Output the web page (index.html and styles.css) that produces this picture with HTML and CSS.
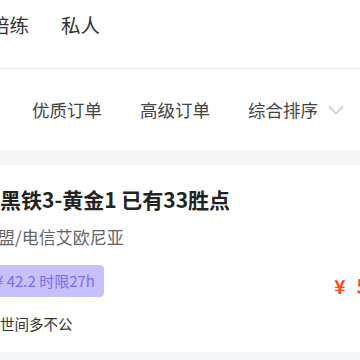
FILE: index.html
```html
<!DOCTYPE html>
<html lang="zh">
<head>
<meta charset="utf-8">
<link rel="stylesheet" href="styles.css">
</head>
<body>
<div class="page">
  <div class="tabs">
    <span class="tab">陪练</span>
    <span class="tab">私人</span>
  </div>
  <div class="filters">
    <span class="filter">优质订单</span>
    <span class="filter">高级订单</span>
    <span class="filter sort">综合排序
      <svg class="chev" width="16" height="10" viewBox="0 0 16 10"><path d="M1 1.5 L8 8.5 L15 1.5" fill="none" stroke="#c4c4c8" stroke-width="1.4"/></svg>
    </span>
  </div>
  <div class="gap"></div>
  <div class="card">
    <div class="title">黑铁3-黄金1 已有33胜点</div>
    <div class="sub">英雄联盟/电信艾欧尼亚</div>
    <div class="row">
      <span class="badge">¥ 42.2 时限27h</span>
      <span class="price"><span class="yen">¥</span><span class="num">50</span></span>
    </div>
    <div class="user">世间多不公</div>
  </div>
  <div class="gap"></div>
</div>
</body>
</html>
```
FILE: styles.css
```css
html, body { margin: 0; padding: 0; background: #fff; overflow: hidden; }
body { width: 360px; height: 360px; font-family: "Noto Sans CJK SC", "Noto Sans", sans-serif; color: #333; }
.page { width: 360px; }
.tabs { display: flex; gap: 32px; height: 69px; padding-top: 8px; box-sizing: border-box; margin-left: -10px; border-bottom: 1px solid #ececec; font-size: 19.5px; line-height: 34px; color: #333; }
.filters { display: flex; align-items: center; height: 81px; padding-left: 32px; gap: 38px; font-size: 17.5px; color: #444; }
.filter { display: flex; align-items: center; }
.chev { margin-left: 10px; }
.gap { height: 15px; background: #f5f6f8; }
.card { padding-top: 20px; height: 187px; box-sizing: border-box; }
.title { font-size: 21px; font-weight: bold; color: #222; line-height: 28px; margin-left: 0; }
.sub { margin-left: -53px; font-size: 17px; color: #666; line-height: 24px; margin-top: 12px; }
.row { display: flex; justify-content: space-between; align-items: flex-start; margin-top: 16px; height: 32px; }
.badge { margin-left: -15px; background: #c6c1fb; color: #7a6cf2; font-size: 15px; line-height: 32px; padding: 0 10px 0 10px; border-radius: 4px; width: 99px; box-sizing: content-box; white-space: nowrap; }
.price { color: #ff4a14; margin-right: -20px; display: flex; align-items: baseline; margin-top: 7px; line-height: 28px; }
.yen { font-size: 19px; font-weight: bold; margin-right: 11px; }
.num { font-size: 20px; font-weight: bold; }
.user { font-size: 14.5px; color: #333; line-height: 22px; margin-top: 16px; }
```
